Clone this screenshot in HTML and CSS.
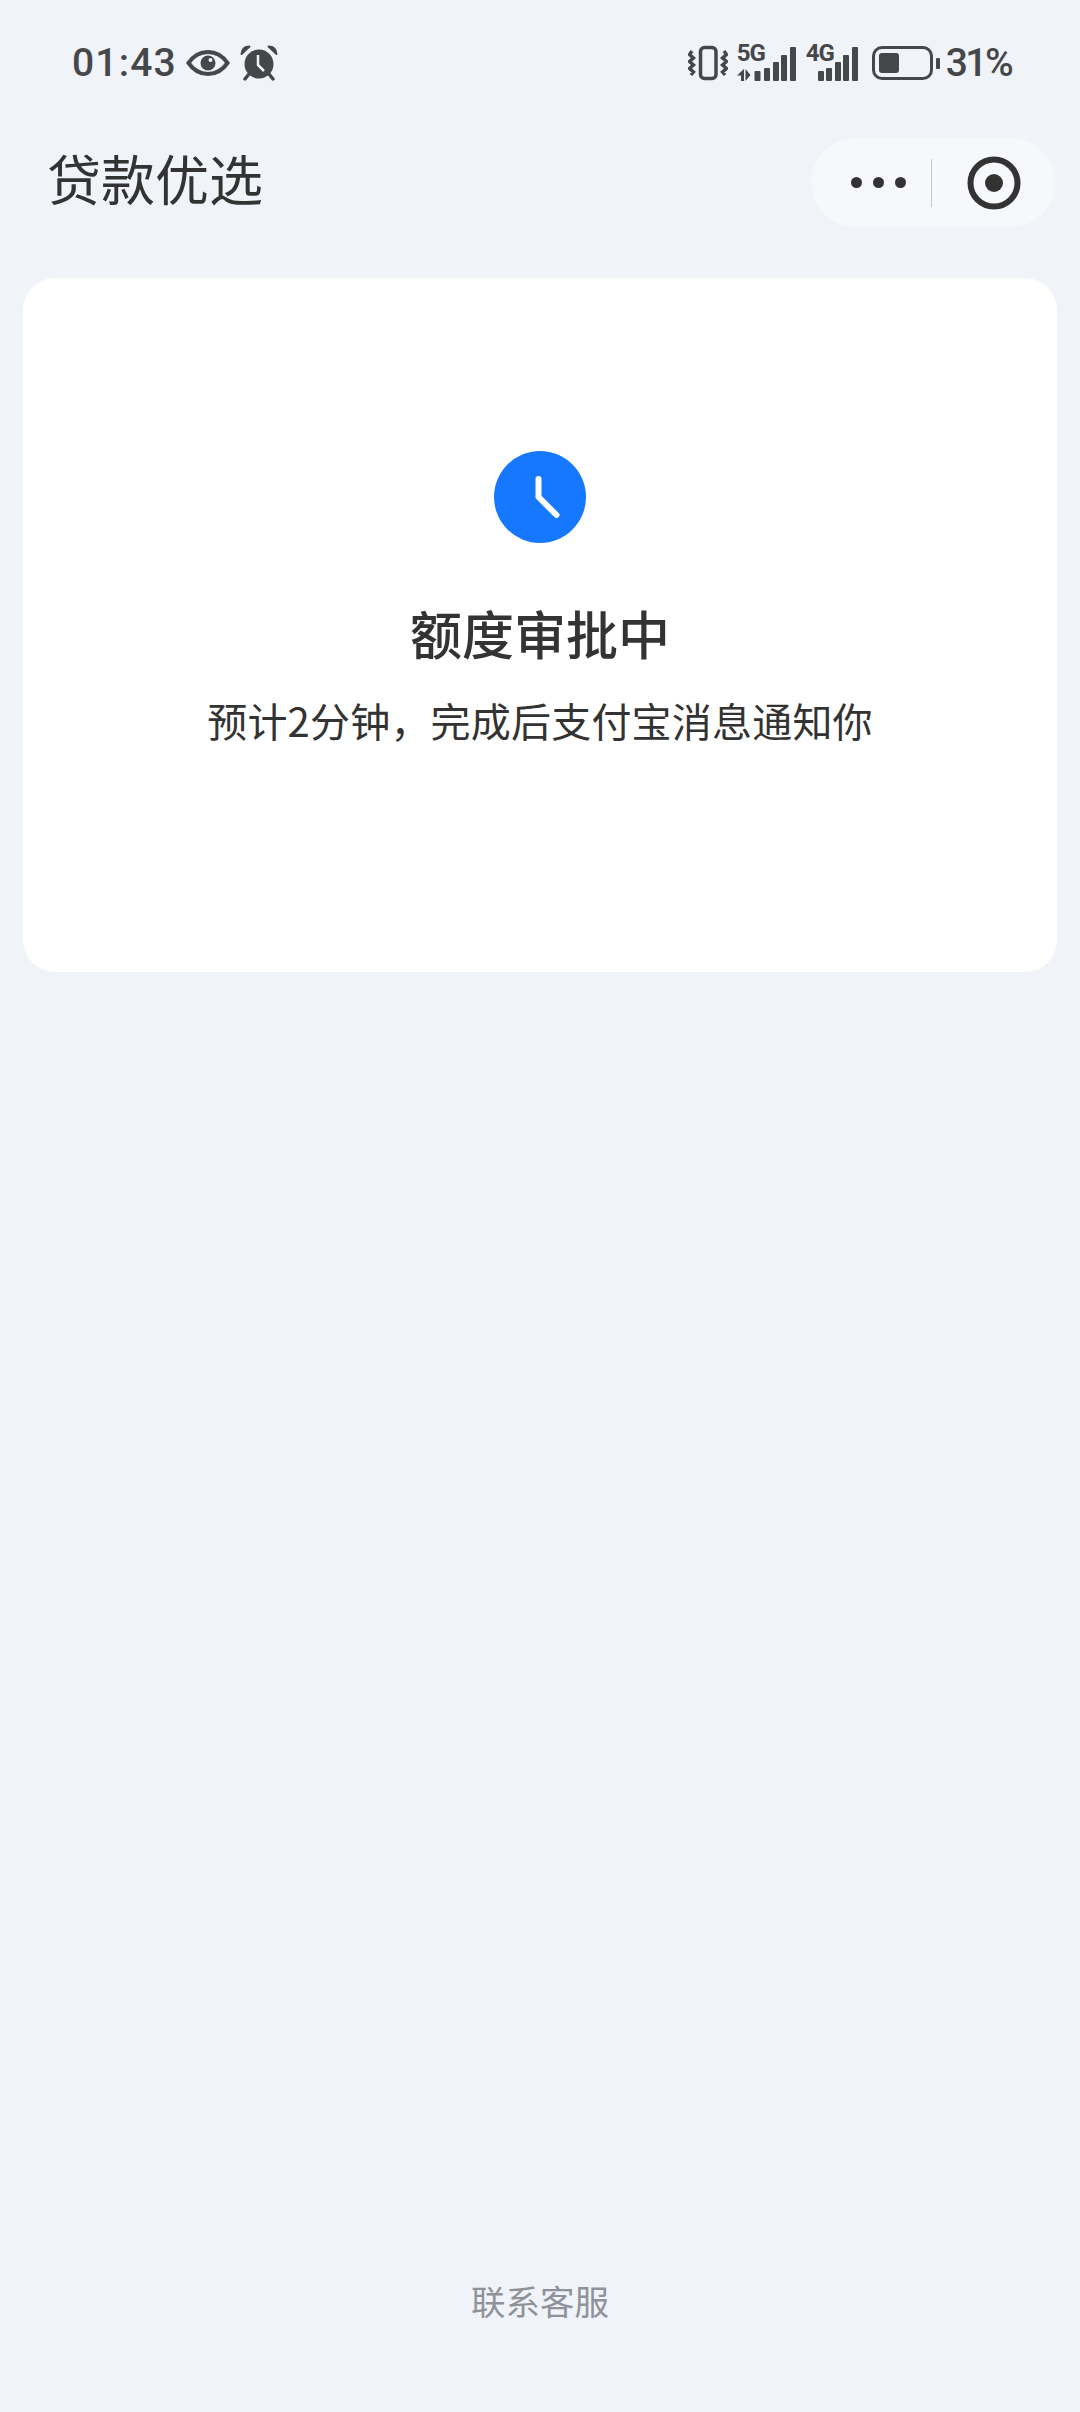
FILE: index.html
```html
<!DOCTYPE html>
<html lang="zh-CN">

<head>
  <meta charset="UTF-8">
  <meta name="viewport" content="width=device-width, initial-scale=1.0">
  <title>贷款优选</title>
  <link rel="stylesheet" href="styles.css">
</head>

<body>
  <div class="status">
    <div class="status-left">
      <span class="time">01:43</span>
      <svg class="eye" width="44" height="28" viewBox="0 0 44 28">
        <path d="M2.5 14C8 6 14 3 22 3s14 3 19.500 11C36 22 30 25 22 25S8 22 2.500 14z" fill="none" stroke="#46474b" stroke-width="4" />
        <circle cx="22" cy="14" r="7.500" fill="#46474b" />
        <circle cx="24.500" cy="11" r="2" fill="#f0f3f8" />
      </svg>
      <svg class="alarm" width="38" height="36" viewBox="0 0 38 36">
        <circle cx="19" cy="19" r="14.500" fill="#46474b" />
        <path d="M1.500 9C2 4 5 1.500 9.500 1.500L1.500 9zM36.500 9C36 4 33 1.500 28.500 1.500L36.500 9z" fill="#46474b" stroke="#46474b" stroke-width="2" stroke-linejoin="round" />
        <path d="M9 29l-4 5M29 29l4 5" stroke="#46474b" stroke-width="3.500" stroke-linecap="round" />
        <path d="M18 10v10l6 6" fill="none" stroke="#f0f3f8" stroke-width="2.500" />
      </svg>
    </div>
    <div class="status-right">
      <svg width="40" height="36" viewBox="0 0 40 36">
        <rect x="12.500" y="2.500" width="15.500" height="31" rx="4" fill="none" stroke="#46474b" stroke-width="3.500" />
        <path d="M4 6L1.500 9.500 5.500 13 1.500 16.500 5.500 20 1.500 23.500 5.500 27 3 30M36 6l2.500 3.500-4 3.500 4 3.500-4 3.500 4 3.500-4 3.500 2.500 3" fill="none" stroke="#46474b" stroke-width="3.400" />
      </svg>
      <div class="signal signal-5g">
        <span class="net">5G</span>
        <span class="arrows">
          <svg width="24" height="12" viewBox="0 0 24 12">
            <path d="M7 0v12H4V6.500H0zM8.500 0l5 6-5 6z" fill="#46474b" />
            <rect x="17.500" y="2" width="6" height="10" rx="1" fill="#46474b" />
          </svg>
        </span>
        <span class="bars">
          <i class="b1"></i><i class="b2"></i><i class="b3"></i><i class="b4"></i>
        </span>
      </div>
      <div class="signal signal-4g">
        <span class="net">4G</span>
        <span class="bars">
          <i class="b0"></i><i class="b1"></i><i class="b2"></i><i class="b3"></i><i class="b4"></i>
        </span>
      </div>
      <div class="battery">
        <div class="battery-body">
          <div class="battery-level"></div>
        </div>
        <div class="battery-tip"></div>
      </div>
      <span class="percent">31%</span>
    </div>
  </div>

  <div class="nav">
    <h1 class="nav-title">贷款优选</h1>
    <div class="capsule">
      <div class="dots"><i></i><i></i><i></i></div>
      <div class="capsule-line"></div>
      <svg width="54" height="54" viewBox="0 0 54 54">
        <circle cx="27" cy="27" r="23.500" fill="none" stroke="#333" stroke-width="6" />
        <circle cx="27" cy="27" r="9" fill="#333" />
      </svg>
    </div>
  </div>

  <div class="card">
    <svg class="clock" width="92" height="92" viewBox="0 0 92 92">
      <circle cx="46" cy="46" r="46" fill="#1677ff" />
      <path d="M44.500 28v18l18 18" fill="none" stroke="#fff" stroke-width="6" stroke-linecap="round" stroke-linejoin="round" />
    </svg>
    <h2 class="card-title">额度审批中</h2>
    <p class="card-desc">预计2分钟，完成后支付宝消息通知你</p>
  </div>

  <a class="service">联系客服</a>
</body>

</html>
```

FILE: styles.css
```css
html {
  background-color: #f0f3f8;
}

body {
  margin: 0;
  width: 1080px;
  height: 2412px;
  display: flex;
  flex-direction: column;
  font-family: "Noto Sans CJK SC", Roboto, sans-serif;
  color: #333;
}

/* status bar */
.status {
  height: 126px;
  box-sizing: border-box;
  padding: 0 69px 0 72px;
  display: flex;
  justify-content: space-between;
  align-items: center;
  color: #46474b;
  font-family: Roboto, sans-serif;
  font-weight: 500;
}

.status-left,
.status-right {
  display: flex;
  align-items: center;
}

.time {
  font-size: 39px;
  letter-spacing: 1.2px;
  margin-right: 9px;
}

.alarm {
  margin-left: 10px;
}

.signal {
  position: relative;
  display: flex;
  align-items: flex-end;
  height: 36px;
  margin-left: 9px;
}

.signal-5g {
  width: 59px;
  justify-content: flex-end;
}

.signal-4g {
  width: 52px;
  margin-left: 10px;
  justify-content: flex-end;
}

.net {
  position: absolute;
  left: 0;
  top: -5px;
  font-size: 24px;
  line-height: 26px;
  font-weight: 700;
  letter-spacing: -1px;
}

.arrows {
  position: absolute;
  left: 0;
  bottom: 0;
  height: 12px;
}

.arrows svg {
  display: block;
}

.bars {
  display: flex;
  align-items: flex-end;
  gap: 2.500px;
}

.bars i {
  display: block;
  width: 6px;
  background: #46474b;
  border-radius: 1px;
}

.bars .b0 {
  height: 10px;
}

.bars .b1 {
  height: 13px;
}

.bars .b2 {
  height: 19px;
}

.bars .b3 {
  height: 26px;
}

.bars .b4 {
  height: 34px;
}

.battery {
  display: flex;
  align-items: center;
  margin-left: 14px;
}

.battery-body {
  width: 61px;
  height: 34px;
  box-sizing: border-box;
  border: 3.500px solid #46474b;
  border-radius: 10px;
  padding: 4px;
}

.battery-level {
  width: 20px;
  height: 100%;
  background: #46474b;
  border-radius: 3px;
}

.battery-tip {
  width: 4px;
  height: 11px;
  margin-left: 3px;
  background: #46474b;
  border-radius: 1px;
}

.percent {
  font-size: 39px;
  letter-spacing: -2.600px;
  margin-left: 6px;
}

/* nav */
.nav {
  height: 113px;
  padding: 0 25px 0 47px;
  display: flex;
  justify-content: space-between;
  align-items: center;
}

.nav-title {
  margin: 0 0 11px;
  font-size: 54px;
  font-weight: 400;
}

.capsule {
  width: 244px;
  height: 89px;
  box-sizing: border-box;
  padding: 0 34px 0 40px;
  display: flex;
  align-items: center;
  background: #f7f8fb;
  border-radius: 45px;
}

.capsule svg {
  margin-left: 35px;
}

.dots {
  display: flex;
  gap: 11px;
}

.dots i {
  display: block;
  width: 11px;
  height: 11px;
  background: #333;
  border-radius: 50%;
}

.capsule-line {
  width: 1px;
  height: 48px;
  margin-left: 25px;
  background: #c4c5c8;
}

/* card */
.card {
  margin: 39px 23px 0;
  height: 694px;
  box-sizing: border-box;
  padding-top: 173px;
  display: flex;
  flex-direction: column;
  align-items: center;
  background: #fff;
  border-radius: 32px;
}

.clock {
  display: block;
}

.card-title {
  margin: 54px 0 0;
  font-size: 52px;
  line-height: 72px;
  font-weight: 500;
}

.card-desc {
  margin: 21px 0 0;
  font-size: 40px;
  letter-spacing: 0.2px;
  line-height: 60px;
}

.service {
  margin-top: auto;
  margin-bottom: 86px;
  text-align: center;
  font-size: 34.500px;
  line-height: 52px;
  color: #8f9299;
}
```
